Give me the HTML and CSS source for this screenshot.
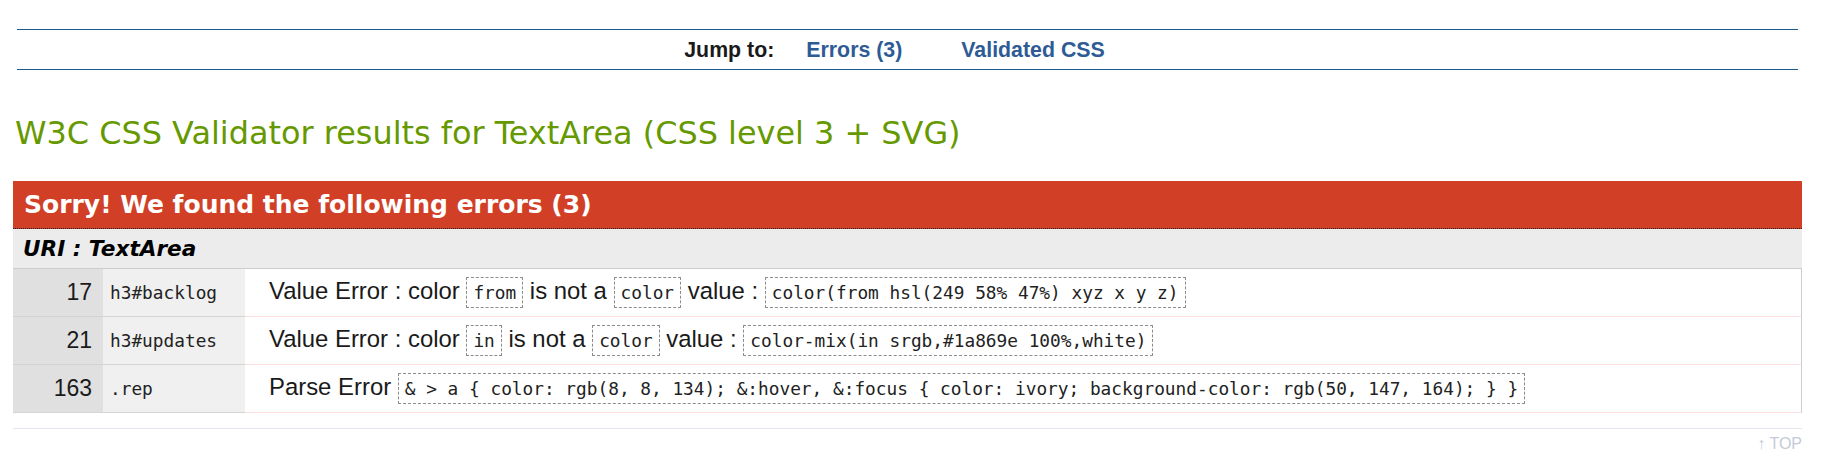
FILE: index.html
```html
<!DOCTYPE html>
<html lang="en">
<head>
<meta charset="utf-8">
<title>W3C CSS Validator results for TextArea (CSS level 3 + SVG)</title>
<link rel="stylesheet" href="styles.css">
</head>
<body>
<div class="page">
  <ul class="jumpbar">
    <li class="jump-label">Jump to:</li>
    <li class="jump-item"><a href="#errors">Errors (3)</a></li>
    <li class="jump-item"><a href="#css">Validated CSS</a></li>
  </ul>
  <h2 class="title">W3C CSS Validator results for TextArea (CSS level 3 + SVG)</h2>
  <div class="errors" id="errors">
    <h3 class="errors-head">Sorry! We found the following errors (3)</h3>
    <div class="uri">URI : TextArea</div>
    <table class="error-table">
      <tr>
        <td class="linenumber">17</td>
        <td class="context">h3#backlog</td>
        <td class="message">Value Error : color <span class="code">from</span> is not a <span class="code">color</span> value : <span class="code">color(from hsl(249 58% 47%) xyz x y z)</span></td>
      </tr>
      <tr>
        <td class="linenumber">21</td>
        <td class="context">h3#updates</td>
        <td class="message">Value Error : color <span class="code">in</span> is not a <span class="code">color</span> value : <span class="code">color-mix(in srgb,#1a869e 100%,white)</span></td>
      </tr>
      <tr>
        <td class="linenumber">163</td>
        <td class="context">.rep</td>
        <td class="message">Parse Error <span class="code">&amp; &gt; a { color: rgb(8, 8, 134); &amp;:hover, &amp;:focus { color: ivory; background-color: rgb(50, 147, 164); } }</span></td>
      </tr>
    </table>
  </div>
  <div class="footer-rule"></div>
  <p class="top"><a href="#">↑ TOP</a></p>
</div>
</body>
</html>
```

FILE: styles.css
```css
* { box-sizing: border-box; }
html, body { margin: 0; padding: 0; background: #fff; }
body {
  font-family: "Liberation Sans", Arial, sans-serif;
  color: #1a1a1a;
}
.page { padding: 29px 35px 0 13px; }

.jumpbar {
  list-style: none;
  margin: 0 4px;
  padding: 1px 26px 0 0;
  height: 41px;
  border-top: 1px solid #1d5a8c;
  border-bottom: 1px solid #1d5a8c;
  display: flex;
  justify-content: center;
  align-items: center;
  line-height: 38px;
  font-size: 21.33px;
  font-weight: bold;
}
.jump-label { margin-right: 32px; color: #1a1a1a; }
.jump-item + .jump-item { margin-left: 59px; }
.jumpbar a { color: #2e5b96; text-decoration: none; }

.title {
  margin: 45px 0 0;
  padding-left: 2px;
  font-family: "DejaVu Sans", Verdana, sans-serif;
  font-weight: normal;
  font-size: 31.9px;
  line-height: 37px;
  color: #669900;
}

.errors { margin-top: 29px; }
.errors-head {
  margin: 0;
  height: 48px;
  padding-left: 11px;
  background: #d23f27;
  color: #fff;
  font-family: "DejaVu Sans", Verdana, sans-serif;
  font-weight: bold;
  font-size: 25px;
  line-height: 47px;
  border-bottom: 1px dotted #222;
}
.uri {
  height: 40px;
  padding-left: 10px;
  background: #ececec;
  border-bottom: 1px solid #cccccc;
  font-family: "DejaVu Sans", Verdana, sans-serif;
  font-weight: bold;
  font-style: italic;
  font-size: 21.6px;
  line-height: 39px;
  color: #000;
}

.error-table {
  width: 100%;
  border-collapse: separate;
  border-spacing: 0;
}
.error-table td {
  height: 48px;
  padding: 0;
  vertical-align: middle;
}
.linenumber {
  width: 90px;
  padding-right: 11px !important;
  background: #e0e0e0;
  border-bottom: 1px solid #d4d4d4;
  text-align: right;
  font-size: 23px;
  color: #1a1a1a;
}
.context {
  width: 142px;
  padding-left: 7px !important;
  background: #f0f0f0;
  border-bottom: 1px solid #d4d4d4;
  font-family: "DejaVu Sans Mono", "Liberation Mono", monospace;
  font-size: 17.8px;
  color: #222;
}
.message {
  padding-left: 24px !important;
  border-bottom: 1px solid #fddddd;
  border-right: 1px solid #cccccc;
  font-size: 23.9px;
  color: #1a1a1a;
}
.code {
  display: inline-block;
  vertical-align: middle;
  padding: 3px 6px;
  border: 1px dashed #8c8c8c;
  font-family: "DejaVu Sans Mono", "Liberation Mono", monospace;
  font-size: 17.8px;
  line-height: 23px;
  color: #222;
}

.footer-rule {
  margin-top: 15px;
  height: 1px;
  background: #e4e6ef;
}
.top {
  margin: 6px 0 0;
  text-align: right;
  font-size: 16px;
  line-height: 18px;
}
.top a { color: #c4cad8; text-decoration: none; }
```
